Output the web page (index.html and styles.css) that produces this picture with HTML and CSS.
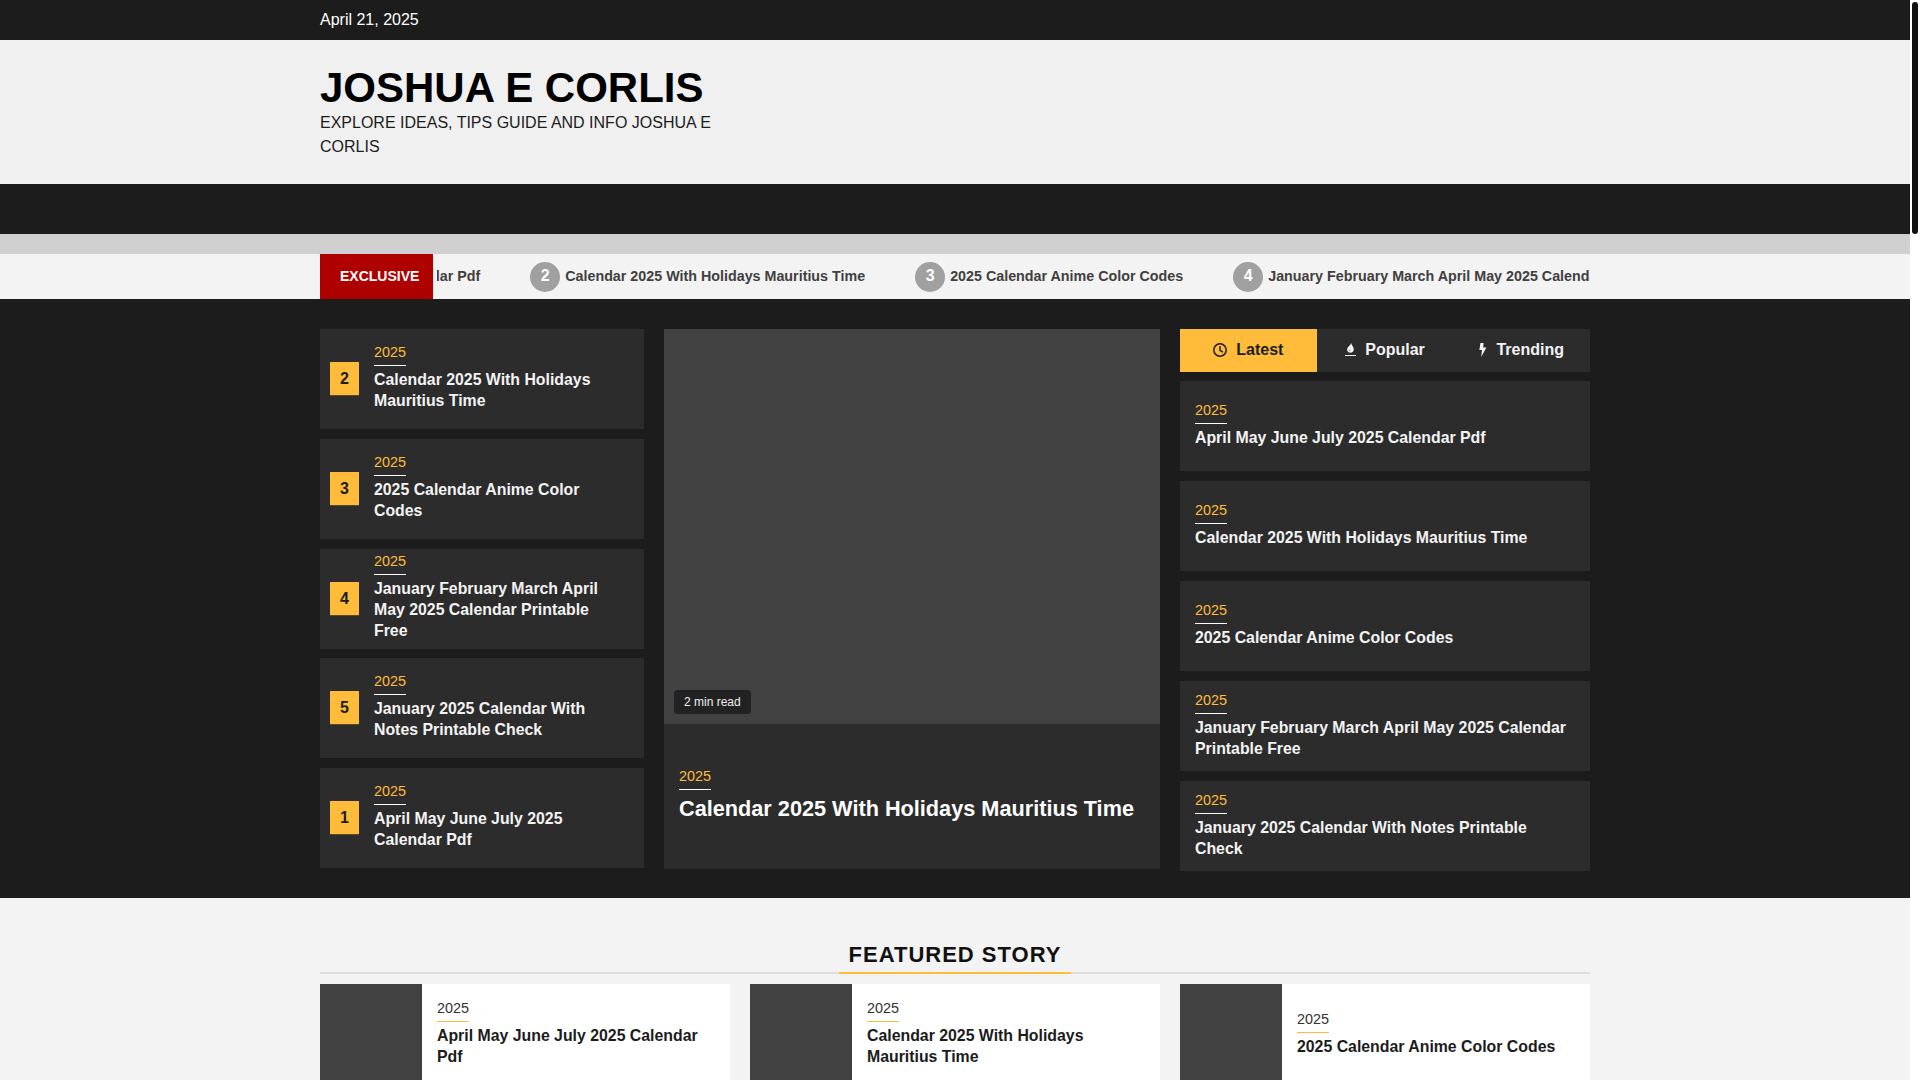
FILE: index.html
```html
<!DOCTYPE html>
<html lang="en">
<head>
<meta charset="utf-8">
<title>Joshua E Corlis</title>
<link rel="stylesheet" href="styles.css">
</head>
<body>
<div class="page">
  <div class="topbar"><div class="wrap">April 21, 2025</div></div>
  <header class="masthead">
    <div class="wrap">
      <h1 class="site-title">JOSHUA E CORLIS</h1>
      <p class="tagline">EXPLORE IDEAS, TIPS GUIDE AND INFO JOSHUA E CORLIS</p>
    </div>
  </header>
  <nav class="navbar"></nav>
  <div class="strip"></div>
  <div class="ticker">
    <div class="wrap ticker-wrap">
      <div class="ticker-label">EXCLUSIVE</div>
      <div class="ticker-clip">
        <div class="ticker-track">
          <a class="tick"><span class="tick-num">1</span>April May June July 2025 Calendar Pdf</a>
          <a class="tick"><span class="tick-num">2</span>Calendar 2025 With Holidays Mauritius Time</a>
          <a class="tick"><span class="tick-num">3</span>2025 Calendar Anime Color Codes</a>
          <a class="tick"><span class="tick-num">4</span>January February March April May 2025 Calendar Printable Free</a>
        </div>
      </div>
    </div>
  </div>
  <section class="hero">
    <div class="wrap hero-grid">
      <div class="rank-col">
        <article class="rank-card"><span class="rank">2</span><div class="body"><span class="cat">2025</span><h3 class="ttl">Calendar 2025 With Holidays Mauritius Time</h3></div></article>
        <article class="rank-card"><span class="rank">3</span><div class="body"><span class="cat">2025</span><h3 class="ttl">2025 Calendar Anime Color Codes</h3></div></article>
        <article class="rank-card"><span class="rank">4</span><div class="body"><span class="cat">2025</span><h3 class="ttl">January February March April May 2025 Calendar Printable Free</h3></div></article>
        <article class="rank-card"><span class="rank">5</span><div class="body"><span class="cat">2025</span><h3 class="ttl">January 2025 Calendar With Notes Printable Check</h3></div></article>
        <article class="rank-card"><span class="rank">1</span><div class="body"><span class="cat">2025</span><h3 class="ttl">April May June July 2025 Calendar Pdf</h3></div></article>
      </div>
      <article class="lead">
        <div class="lead-img"><span class="read">2 min read</span></div>
        <div class="lead-body"><span class="cat">2025</span><h2 class="lead-ttl">Calendar 2025 With Holidays Mauritius Time</h2></div>
      </article>
      <div class="side-col">
        <div class="tabs">
          <div class="tab active"><svg class="ico" viewBox="0 0 14 14"><circle cx="7" cy="7" r="6.2" fill="none" stroke="currentColor" stroke-width="1.5"/><path d="M7 3.2V7.3L9.8 9.2" fill="none" stroke="currentColor" stroke-width="1.5"/></svg>Latest</div>
          <div class="tab"><svg class="ico ico-fire" viewBox="0 0 11 13"><path d="M6.2 0C6.3 2.4 8.8 3.6 8.8 6.2C8.8 8.3 7.2 9.8 5.3 9.8C3.5 9.8 2.1 8.4 2.1 6.6C2.1 4.3 5 3 6.2 0ZM4.6 6.2C4.2 7 4.5 8.2 5.6 8.2C5 7.5 4.9 7 4.6 6.2Z" fill="currentColor" fill-rule="evenodd"/><path d="M0 12H11V13H0Z" fill="currentColor"/></svg>Popular</div>
          <div class="tab"><svg class="ico ico-bolt" viewBox="0 0 8 14"><path d="M4.6 0H1.4L0.4 7H3L2.2 14L7.4 4.6H4.2Z" fill="currentColor"/></svg>Trending</div>
        </div>
        <article class="side-card"><span class="cat">2025</span><h3 class="ttl">April May June July 2025 Calendar Pdf</h3></article>
        <article class="side-card"><span class="cat">2025</span><h3 class="ttl">Calendar 2025 With Holidays Mauritius Time</h3></article>
        <article class="side-card"><span class="cat">2025</span><h3 class="ttl">2025 Calendar Anime Color Codes</h3></article>
        <article class="side-card"><span class="cat">2025</span><h3 class="ttl">January February March April May 2025 Calendar Printable Free</h3></article>
        <article class="side-card"><span class="cat">2025</span><h3 class="ttl">January 2025 Calendar With Notes Printable Check</h3></article>
      </div>
    </div>
  </section>
  <section class="featured">
    <div class="wrap">
      <div class="section-head"><h2 class="section-title">FEATURED STORY</h2></div>
      <div class="feat-grid">
        <article class="feat-card"><div class="feat-img"></div><div class="feat-body"><span class="cat cat-light">2025</span><h3 class="ttl ttl-dark">April May June July 2025 Calendar Pdf</h3></div></article>
        <article class="feat-card"><div class="feat-img"></div><div class="feat-body"><span class="cat cat-light">2025</span><h3 class="ttl ttl-dark">Calendar 2025 With Holidays Mauritius Time</h3></div></article>
        <article class="feat-card"><div class="feat-img"></div><div class="feat-body"><span class="cat cat-light">2025</span><h3 class="ttl ttl-dark">2025 Calendar Anime Color Codes</h3></div></article>
      </div>
    </div>
  </section>
</div>
<div class="scroll-track"><div class="scroll-thumb"></div></div>
</body>
</html>
```
FILE: styles.css
```css
* { box-sizing: border-box; }
html { overflow: hidden; }
body { margin: 0; font-family: "Liberation Sans", Arial, sans-serif; font-size: 16px; color: #1c1c1c; background: #fff; }
h1, h2, h3, p { margin: 0; }
.page { width: 1910px; background: #f3f3f3; }
.wrap { width: 1270px; margin: 0 auto; }

.scroll-track { position: fixed; top: 0; right: 0; width: 10px; height: 100%; background: #fff; }
.scroll-thumb { width: 6px; height: 232px; margin: 2px 2px 0; border-radius: 3px; background: #111; }

.topbar { height: 40px; background: #1c1c1c; color: #fff; line-height: 39px; }
.masthead { height: 144px; background: #f0f0f0; padding-top: 24px; }
.site-title { font-size: 42px; line-height: 48px; font-weight: 700; color: #000; }
.tagline { width: 410px; line-height: 24px; color: #1c1c1c; margin-top: -1px; }
.navbar { height: 50px; background: #1c1c1c; }
.strip { height: 20px; background: #d0d0d0; }

.ticker { height: 45px; background: #f3f3f3; }
.ticker-wrap { display: flex; height: 45px; }
.ticker-label { flex: none; width: 113px; height: 45px; padding-left: 20px; background: #af0000; color: #fff; font-size: 14px; font-weight: 700; line-height: 44px; }
.ticker-clip { flex: 1; min-width: 0; margin-left: 4px; overflow: hidden; }
.ticker-track { display: flex; gap: 50px; height: 45px; margin-left: -254px; white-space: nowrap; }
.tick { display: flex; align-items: center; gap: 5px; padding-bottom: 2px; font-size: 14.3px; font-weight: 700; color: #404040; }
.tick-num { width: 30px; height: 30px; margin-top: 2px; border-radius: 50%; background: #a0a0a0; color: #fff; font-size: 16px; line-height: 27px; text-align: center; }

.hero { height: 599px; background: #1c1c1c; padding-top: 30px; }
.hero-grid { display: grid; grid-template-columns: 324px 496px 410px; gap: 20px; }
.rank-col { display: flex; flex-direction: column; gap: 9.75px; }
.rank-card { display: flex; align-items: center; height: 100px; padding-left: 10px; background: #2c2c2c; }
.rank { flex: none; width: 29px; height: 34px; margin-right: 15px; background: #ffbc3b; border-bottom: 1px solid #5a4a28; color: #1c1c1c; font-size: 16px; font-weight: 700; line-height: 33px; text-align: center; }
.body { width: 240px; padding-bottom: 2px; }
.cat { display: block; width: max-content; padding-bottom: 4px; border-bottom: 1px solid #fff; margin-bottom: 4px; font-size: 14.4px; line-height: 17px; color: #ffbc3b; }
.ttl { font-size: 15.85px; line-height: 20.8px; font-weight: 700; color: #f3f3f3; }

.lead { background: #2c2c2c; height: 540px; }
.lead-img { position: relative; height: 395px; background: #414141; }
.read { position: absolute; left: 10px; bottom: 10px; height: 24px; padding: 0 10px; border-radius: 4px; background: #222; color: #eee; font-size: 12px; line-height: 24px; }
.lead-body { padding: 44px 15px 0; }
.lead-ttl { font-size: 21.7px; line-height: 30px; font-weight: 700; color: #fff; }

.side-col { display: flex; flex-direction: column; }
.tabs { display: flex; height: 43px; margin-bottom: 9px; background: #2c2c2c; }
.tab { flex: 1; display: flex; align-items: center; justify-content: center; gap: 9px; font-size: 16px; font-weight: 700; color: #f3f3f3; padding-bottom: 2px; }
.tab.active { background: #ffbc3b; color: #1c1c1c; }
.ico { width: 14px; height: 14px; }
.ico-fire { width: 11px; height: 13px; }
.ico-bolt { width: 8px; }
.side-card { display: flex; flex-direction: column; justify-content: center; height: 90px; padding: 0 15px 1px; margin-bottom: 10px; background: #2c2c2c; }

.featured { padding-top: 41px; }
.section-head { height: 35px; border-bottom: 2px solid #ddd; display: flex; justify-content: center; }
.section-title { height: 35px; padding: 0 10px; border-bottom: 2px solid #ffbc3b; font-size: 22px; line-height: 32px; font-weight: 700; letter-spacing: 1px; color: #111; }
.feat-grid { display: grid; grid-template-columns: repeat(3, 410px); gap: 20px; margin-top: 10px; }
.feat-card { display: flex; height: 100px; background: #fff; }
.feat-img { flex: none; width: 102px; background: #414141; }
.feat-body { flex: 1; padding: 0 15px; display: flex; flex-direction: column; justify-content: center; }
.cat-light { color: #333; border-bottom-color: #ffbc3b; }
.ttl-dark { color: #1c1c1c; }
```
